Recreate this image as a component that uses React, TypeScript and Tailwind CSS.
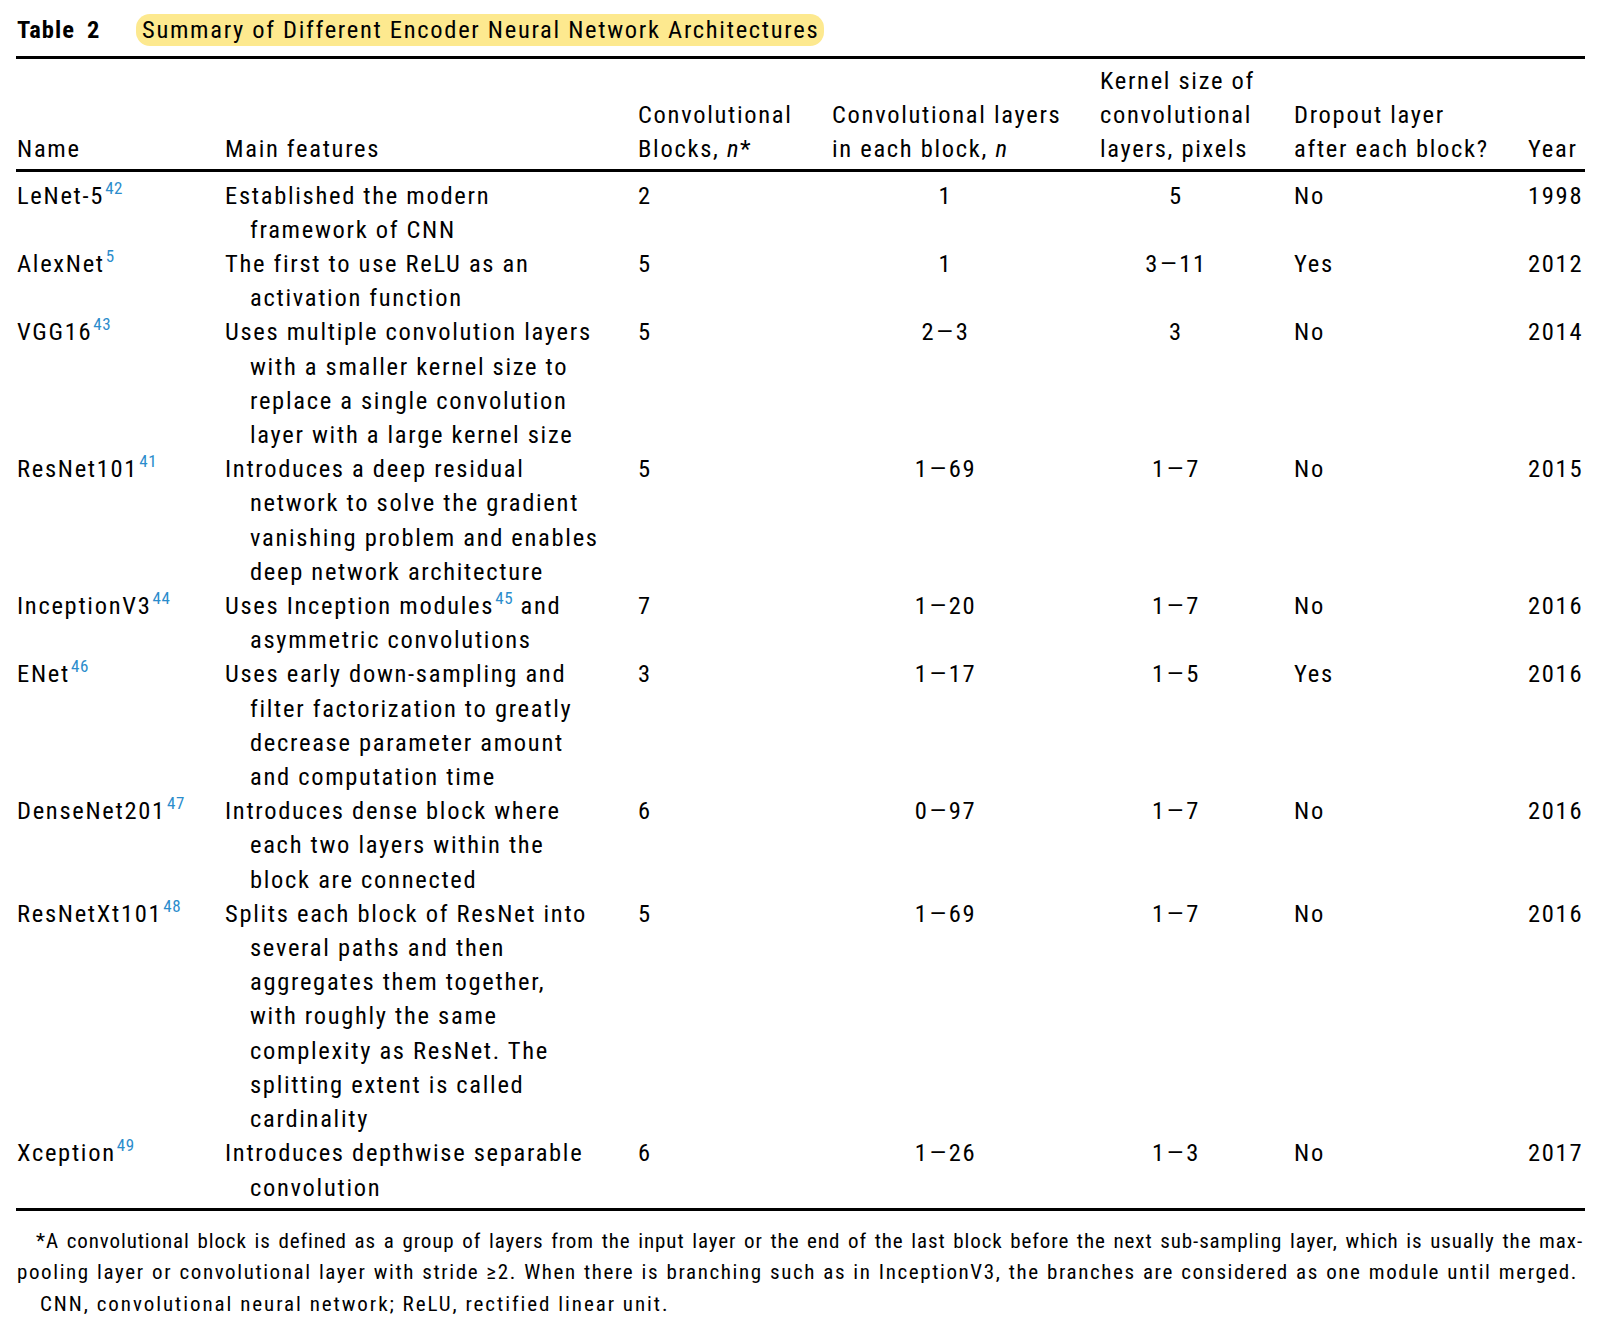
import React from "react";

type Row = {
  name: string;
  ref: string;
  feat: React.ReactNode[];
  blocks: string;
  layers: string;
  kernel: string;
  dropout: string;
  year: string;
};

const Sup = ({ children }: { children: React.ReactNode }) => (
  <span className="text-[17px] text-[#2b8ccc] align-[10px] leading-none tracking-[0.6px] ml-[1px]">{children}</span>
);

const Dash = () => <span className="px-[1px]">—</span>;

const rows: Row[] = [
  { name: "LeNet-5", ref: "42", feat: ["Established the modern", "framework of CNN"], blocks: "2", layers: "1", kernel: "5", dropout: "No", year: "1998" },
  { name: "AlexNet", ref: "5", feat: ["The first to use ReLU as an", "activation function"], blocks: "5", layers: "1", kernel: "3-11", dropout: "Yes", year: "2012" },
  {
    name: "VGG16",
    ref: "43",
    feat: ["Uses multiple convolution layers", "with a smaller kernel size to", "replace a single convolution", "layer with a large kernel size"],
    blocks: "5",
    layers: "2-3",
    kernel: "3",
    dropout: "No",
    year: "2014",
  },
  {
    name: "ResNet101",
    ref: "41",
    feat: ["Introduces a deep residual", "network to solve the gradient", "vanishing problem and enables", "deep network architecture"],
    blocks: "5",
    layers: "1-69",
    kernel: "1-7",
    dropout: "No",
    year: "2015",
  },
  {
    name: "InceptionV3",
    ref: "44",
    feat: [
      <>
        Uses Inception modules<Sup>45</Sup> and
      </>,
      "asymmetric convolutions",
    ],
    blocks: "7",
    layers: "1-20",
    kernel: "1-7",
    dropout: "No",
    year: "2016",
  },
  {
    name: "ENet",
    ref: "46",
    feat: ["Uses early down-sampling and", "filter factorization to greatly", "decrease parameter amount", "and computation time"],
    blocks: "3",
    layers: "1-17",
    kernel: "1-5",
    dropout: "Yes",
    year: "2016",
  },
  {
    name: "DenseNet201",
    ref: "47",
    feat: ["Introduces dense block where", "each two layers within the", "block are connected"],
    blocks: "6",
    layers: "0-97",
    kernel: "1-7",
    dropout: "No",
    year: "2016",
  },
  {
    name: "ResNetXt101",
    ref: "48",
    feat: [
      "Splits each block of ResNet into",
      "several paths and then",
      "aggregates them together,",
      "with roughly the same",
      "complexity as ResNet. The",
      "splitting extent is called",
      "cardinality",
    ],
    blocks: "5",
    layers: "1-69",
    kernel: "1-7",
    dropout: "No",
    year: "2016",
  },
  {
    name: "Xception",
    ref: "49",
    feat: ["Introduces depthwise separable", "convolution"],
    blocks: "6",
    layers: "1-26",
    kernel: "1-3",
    dropout: "No",
    year: "2017",
  },
];

const rangeNode = (v: string) => {
  const parts = v.split("-");
  return parts.length === 2 ? (
    <>
      {parts[0]}
      <Dash />
      {parts[1]}
    </>
  ) : (
    v
  );
};

export default function App() {
  return (
    <div className="w-[1612px] min-h-[1325px] bg-white text-black font-['Roboto_Condensed','Liberation_Sans_Narrow',sans-serif] tracking-[1.7px] text-[24.5px] leading-[34.2px] pl-[16px] pt-[14px]">
      <div className="w-[1569px]">
        {/* Title */}
        <div className="flex items-center h-[32px] whitespace-nowrap">
          <span className="font-bold w-[120px] pl-[1px] tracking-[1px]">
            Table<span className="ml-[12px]">2</span>
          </span>
          <span className="bg-[#fde98f] rounded-[14px] pl-[6px] pr-[5px] h-[32px] flex items-center">
            Summary of Different Encoder Neural Network Architectures
          </span>
        </div>

        {/* Table */}
        <div className="mt-[10px] border-t-[3px] border-b-[3px] border-black">
          {/* Header */}
          <div className="grid grid-cols-[209px_413px_194px_268px_194px_234px_1fr] items-end whitespace-nowrap pt-[5px] pb-[2px] border-b-[3px] border-black">
            <div className="pl-[1px]">Name</div>
            <div>Main features</div>
            <div>
              <div>Convolutional</div>
              <div>
                Blocks, <span className="italic">n</span>*
              </div>
            </div>
            <div className="pr-[41px]">
              <div>Convolutional layers</div>
              <div>
                in each block, <span className="italic">n</span>
              </div>
            </div>
            <div className="pr-[42px]">
              <div>Kernel size of</div>
              <div>convolutional</div>
              <div>layers, pixels</div>
            </div>
            <div>
              <div>Dropout layer</div>
              <div>after each block?</div>
            </div>
            <div>Year</div>
          </div>

          {/* Body */}
          <div className="pt-[7px] pb-[3px]">
            {rows.map((r) => (
              <div key={r.name} className="grid grid-cols-[209px_413px_194px_268px_194px_234px_1fr] items-start whitespace-nowrap">
                <div className="pl-[1px]">
                  {r.name}
                  <Sup>{r.ref}</Sup>
                </div>
                <div>
                  {r.feat.map((l, i) => (
                    <div key={i} className={i === 0 ? "" : "pl-[25px]"}>
                      {l}
                    </div>
                  ))}
                </div>
                <div>{r.blocks}</div>
                <div className="pr-[41px] text-center">{rangeNode(r.layers)}</div>
                <div className="pr-[42px] text-center">{rangeNode(r.kernel)}</div>
                <div>{r.dropout}</div>
                <div>{r.year}</div>
              </div>
            ))}
          </div>
        </div>

        {/* Footnote */}
        <div className="pt-[15px] text-[21px] leading-[31.4px] tracking-[1.6px]">
          <div className="ml-[20px] w-[1547px] whitespace-nowrap tracking-[0.9px] [word-spacing:-2px] [text-align-last:justify]">
            *A convolutional block is defined as a group of layers from the input layer or the end of the last block before the next sub-sampling layer, which is usually the max-
          </div>
          <div className="ml-[1px] w-[1561px] whitespace-nowrap [text-align-last:justify]">
            pooling layer or convolutional layer with stride ≥2. When there is branching such as in InceptionV3, the branches are considered as one module until merged.
          </div>
          <div className="ml-[24px] whitespace-nowrap tracking-[1.95px]">CNN, convolutional neural network; ReLU, rectified linear unit.</div>
        </div>
      </div>
    </div>
  );
}
